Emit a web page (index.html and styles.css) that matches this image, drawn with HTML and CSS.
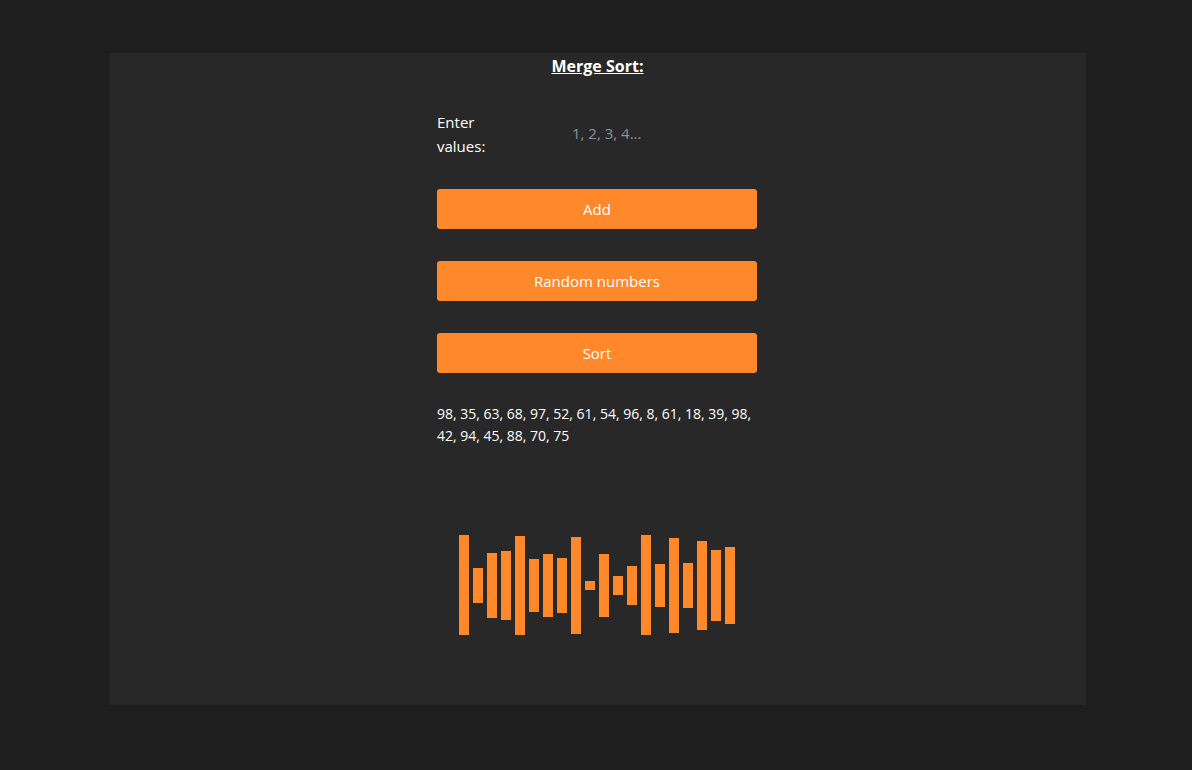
FILE: index.html
```html
<!DOCTYPE html>
<html>
<head>
<meta charset="utf-8">
<link rel="stylesheet" href="styles.css">
</head>
<body>
<div class="panel">
  <h1 class="title">Merge Sort:</h1>
  <div class="form">
    <div class="input-row">
      <label class="label" for="vals">Enter values:</label>
      <input class="input" id="vals" type="text" placeholder="1, 2, 3, 4...">
    </div>
    <button class="btn btn-add">Add</button>
    <button class="btn">Random numbers</button>
    <button class="btn">Sort</button>
    <p class="numbers">98, 35, 63, 68, 97, 52, 61, 54, 96, 8, 61, 18, 39, 98, 42, 94, 45, 88, 70, 75</p>
  </div>
  <div class="bars">
    <div class="bar" style="height:100px"></div>
    <div class="bar" style="height:35px"></div>
    <div class="bar" style="height:65px"></div>
    <div class="bar" style="height:69px"></div>
    <div class="bar" style="height:99px"></div>
    <div class="bar" style="height:53px"></div>
    <div class="bar" style="height:63px"></div>
    <div class="bar" style="height:55px"></div>
    <div class="bar" style="height:97px"></div>
    <div class="bar" style="height:9px"></div>
    <div class="bar" style="height:63px"></div>
    <div class="bar" style="height:19px"></div>
    <div class="bar" style="height:39px"></div>
    <div class="bar" style="height:100px"></div>
    <div class="bar" style="height:43px"></div>
    <div class="bar" style="height:95px"></div>
    <div class="bar" style="height:45px"></div>
    <div class="bar" style="height:89px"></div>
    <div class="bar" style="height:71px"></div>
    <div class="bar" style="height:77px"></div>
  </div>
</div>
</body>
</html>
```

FILE: styles.css
```css
html, body {
  margin: 0;
  padding: 0;
  background: #1e1e1e;
  font-family: "Open Sans", "Noto Sans", sans-serif;
  color: #ffffff;
}

.panel {
  margin: 53px 0 0 109px;
  width: 977px;
  height: 652px;
  background: #282828;
  box-sizing: border-box;
  padding-top: 2px;
}

.title {
  margin: 0;
  font-size: 16px;
  line-height: 22px;
  font-weight: 700;
  text-align: center;
  text-decoration: underline;
}

.form {
  width: 320px;
  margin: 33px 0 0 328px;
  display: flex;
  flex-direction: column;
}

.input-row {
  display: grid;
  grid-template-columns: 135px 1fr;
  align-items: center;
  height: 48px;
}

.label {
  font-size: 15px;
  line-height: 24px;
  width: 60px;
}

.input {
  background: transparent;
  border: none;
  outline: none;
  padding: 0;
  margin-bottom: 3px;
  font-family: inherit;
  font-size: 15px;
  color: #ffffff;
  width: 100%;
}

.input::placeholder {
  color: #8a939c;
}

.btn {
  height: 40px;
  border: none;
  border-radius: 3px;
  background: #ff882a;
  color: #ffffff;
  font-family: inherit;
  font-size: 15px;
  margin-top: 32px;
  padding: 0;
}

.btn-add {
  margin-top: 31px;
}

.numbers {
  margin: 30px 0 0 0;
  font-size: 14px;
  line-height: 22px;
}

.bars {
  margin: 88px 0 0 350px;
  height: 100px;
  display: flex;
  align-items: center;
  gap: 4px;
}

.bar {
  width: 10px;
  background: #ff882a;
}
```
